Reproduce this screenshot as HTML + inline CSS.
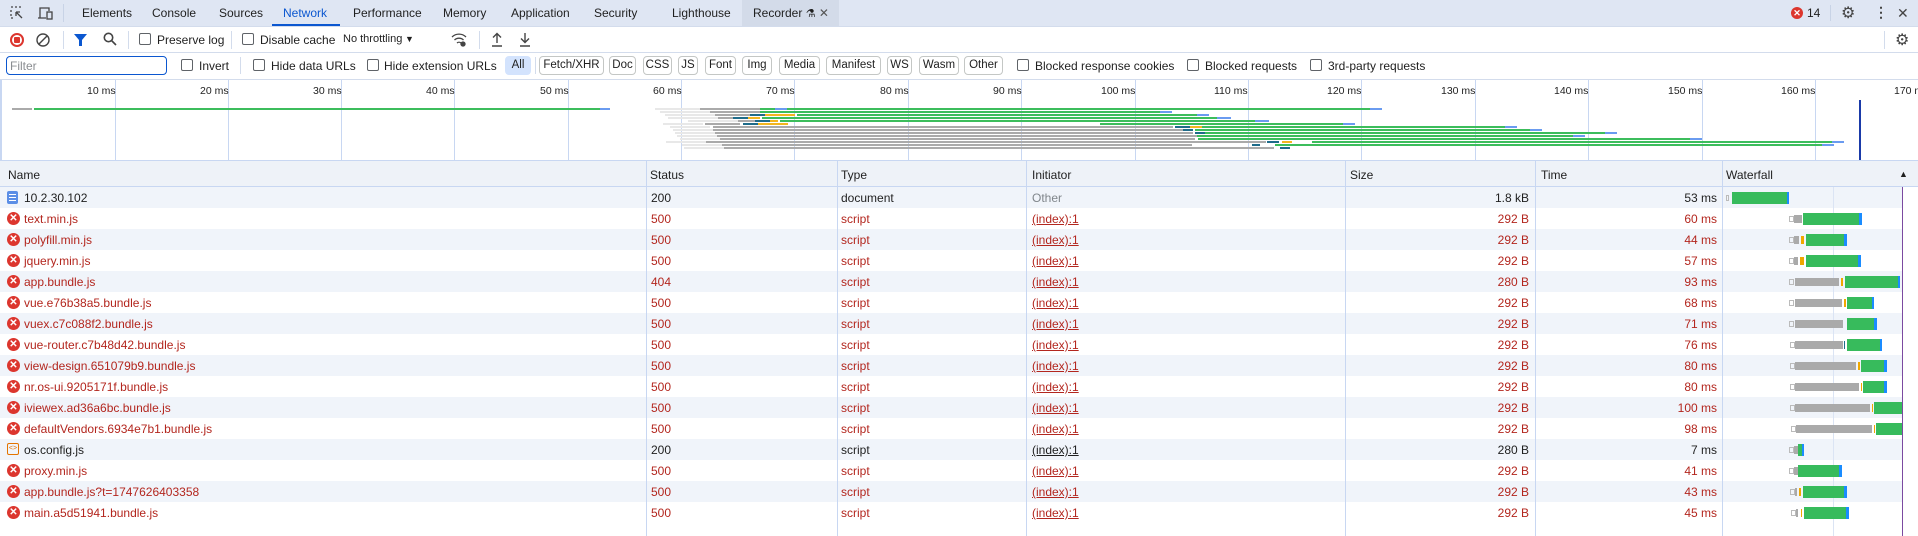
<!DOCTYPE html>
<html><head><meta charset="utf-8"><style>
*{margin:0;padding:0;box-sizing:border-box}
body{width:1918px;height:536px;overflow:hidden;background:#fff;font-family:"Liberation Sans",sans-serif;font-size:12px;color:#1f1f1f;position:relative}
.a{position:absolute;white-space:nowrap}
.cb{position:absolute;width:12px;height:12px;border:1px solid #5f6368;border-radius:2px;background:#fff}
.chip{position:absolute;top:56px;height:19px;border:1px solid #c4c7c5;border-radius:4px;font-size:11.5px;line-height:17px;text-align:center;color:#1f1f1f}
.row{position:absolute;left:0;width:1902px;height:21px}
.row.o{background:#f0f4fa}
.row span{position:absolute;top:4px;white-space:nowrap}
.r{color:#b3261e}
.vl{position:absolute;width:1px;background:#c8d7f2}
.ic{position:absolute;left:7px;top:4px;width:13px;height:13px;border-radius:50%;background:#dc362e;color:#fff;font-size:10px;line-height:13px;text-align:center;font-weight:bold}
.b{position:absolute}
.ob{position:absolute;height:2px}
</style></head><body>
<!-- tab bar -->
<div class="a" style="left:0;top:0;width:1918px;height:26px;background:#dfe6f3"></div>
<div class="a" style="left:742px;top:0;width:97px;height:26px;background:#d3dbe9"></div>
<svg class="a" style="left:10px;top:6px" width="14" height="14" viewBox="0 0 14 14" fill="none" stroke="#444" stroke-width="1.3"><path d="M1 1h2M5 1h2M9 1h2M1 4v2M1 8v2M1 12h2M6 6l6 6M6 6h4M6 6v4" /></svg>
<svg class="a" style="left:37px;top:6px" width="16" height="14" viewBox="0 0 16 14" fill="none" stroke="#444" stroke-width="1.3"><path d="M3 12V2h9v3M1 12h8"/><rect x="10" y="6" width="5" height="7"/></svg>
<div class="a" style="left:63px;top:4px;width:1px;height:18px;background:#c8d3e6"></div>
<div class="a" style="left:82px;top:6px">Elements</div>
<div class="a" style="left:152px;top:6px">Console</div>
<div class="a" style="left:219px;top:6px">Sources</div>
<div class="a" style="left:283px;top:6px;color:#0b57d0">Network</div>
<div class="a" style="left:272px;top:24px;width:68px;height:2px;background:#0b57d0"></div>
<div class="a" style="left:353px;top:6px">Performance</div>
<div class="a" style="left:443px;top:6px">Memory</div>
<div class="a" style="left:511px;top:6px">Application</div>
<div class="a" style="left:594px;top:6px">Security</div>
<div class="a" style="left:672px;top:6px">Lighthouse</div>
<div class="a" style="left:753px;top:6px">Recorder <span style="font-size:11px">⚗</span> <span style="color:#555">✕</span></div>
<div class="a" style="left:1791px;top:7px;width:12px;height:12px;border-radius:50%;background:#dc362e;color:#fff;font-size:9px;line-height:12px;text-align:center;font-weight:bold">✕</div>
<div class="a" style="left:1807px;top:6px">14</div>
<div class="a" style="left:1830px;top:5px;width:1px;height:16px;background:#c8d3e6"></div>
<div class="a" style="left:1841px;top:3px;font-size:16px;color:#444">⚙</div>
<div class="a" style="left:1874px;top:4px;font-size:14px;color:#444;font-weight:bold">⋮</div>
<div class="a" style="left:1897px;top:5px;font-size:14px;color:#444">✕</div>
<!-- toolbar -->
<div class="a" style="left:0;top:26px;width:1918px;height:1px;background:#d3dcec"></div>
<div class="a" style="left:10px;top:33px;width:14px;height:14px;border-radius:50%;border:2px solid #dc362e"></div>
<div class="a" style="left:14px;top:37px;width:6px;height:6px;background:#dc362e;border-radius:1px"></div>
<svg class="a" style="left:36px;top:33px" width="14" height="14" viewBox="0 0 14 14" fill="none" stroke="#444" stroke-width="1.4"><circle cx="7" cy="7" r="6"/><path d="M3 11L11 3"/></svg>
<div class="a" style="left:63px;top:31px;width:1px;height:18px;background:#d3dcec"></div>
<svg class="a" style="left:74px;top:33px" width="13" height="13" viewBox="0 0 13 13"><path d="M0 1h13L8 7v6H5V7z" fill="#0b57d0"/></svg>
<svg class="a" style="left:103px;top:32px" width="14" height="14" viewBox="0 0 14 14" fill="none" stroke="#444" stroke-width="1.6"><circle cx="5.5" cy="5.5" r="4.2"/><path d="M8.5 8.5L13 13"/></svg>
<div class="a" style="left:128px;top:31px;width:1px;height:18px;background:#d3dcec"></div>
<div class="cb" style="left:139px;top:33px"></div><div class="a" style="left:157px;top:33px">Preserve log</div>
<div class="a" style="left:231px;top:31px;width:1px;height:18px;background:#d3dcec"></div>
<div class="cb" style="left:242px;top:33px"></div><div class="a" style="left:260px;top:33px">Disable cache</div>
<div class="a" style="left:343px;top:33px;font-size:11px">No throttling</div>
<div class="a" style="left:405px;top:34px;font-size:9px">▼</div>
<svg class="a" style="left:451px;top:32px" width="16" height="15" viewBox="0 0 16 15" fill="none" stroke="#444" stroke-width="1.3"><path d="M1 5a10 10 0 0 1 14 0M3.5 8a6.5 6.5 0 0 1 9 0M6 11a3 3 0 0 1 4 0"/><circle cx="12" cy="12" r="2" fill="#444"/></svg>
<div class="a" style="left:479px;top:31px;width:1px;height:18px;background:#d3dcec"></div>
<svg class="a" style="left:491px;top:32px" width="12" height="15" viewBox="0 0 12 15" fill="none" stroke="#444" stroke-width="1.4"><path d="M6 11V2M2 5.5L6 1.5l4 4M1 14h10"/></svg>
<svg class="a" style="left:519px;top:32px" width="12" height="15" viewBox="0 0 12 15" fill="none" stroke="#444" stroke-width="1.4"><path d="M6 1v9M2 6.5l4 4 4-4M1 14h10"/></svg>
<div class="a" style="left:1884px;top:31px;width:1px;height:18px;background:#d3dcec"></div>
<div class="a" style="left:1895px;top:30px;font-size:16px;color:#444">⚙</div>
<!-- filter row -->
<div class="a" style="left:0;top:52px;width:1918px;height:1px;background:#d3dcec"></div>
<div class="a" style="left:6px;top:56px;width:161px;height:19px;border:1px solid #0b57d0;border-radius:4px;color:#8a8d91;font-size:12px;padding:2px 3px">Filter</div>
<div class="cb" style="left:181px;top:59px"></div><div class="a" style="left:199px;top:59px">Invert</div>
<div class="a" style="left:240px;top:57px;width:1px;height:17px;background:#d3dcec"></div>
<div class="cb" style="left:253px;top:59px"></div><div class="a" style="left:271px;top:59px">Hide data URLs</div>
<div class="cb" style="left:367px;top:59px"></div><div class="a" style="left:384px;top:59px">Hide extension URLs</div>
<div class="chip" style="left:505px;width:26px;background:#d3e3fd;border-color:#d3e3fd">All</div>
<div class="a" style="left:535px;top:57px;width:1px;height:17px;background:#d3dcec"></div>
<div class="chip" style="left:539px;width:65px">Fetch/XHR</div>
<div class="chip" style="left:609px;width:27px">Doc</div>
<div class="chip" style="left:643px;width:29px">CSS</div>
<div class="chip" style="left:678px;width:20px">JS</div>
<div class="chip" style="left:705px;width:31px">Font</div>
<div class="chip" style="left:742px;width:30px">Img</div>
<div class="chip" style="left:779px;width:41px">Media</div>
<div class="chip" style="left:826px;width:55px">Manifest</div>
<div class="chip" style="left:887px;width:25px">WS</div>
<div class="chip" style="left:919px;width:40px">Wasm</div>
<div class="chip" style="left:964px;width:39px">Other</div>
<div class="cb" style="left:1017px;top:59px"></div><div class="a" style="left:1035px;top:59px">Blocked response cookies</div>
<div class="cb" style="left:1187px;top:59px"></div><div class="a" style="left:1205px;top:59px">Blocked requests</div>
<div class="cb" style="left:1310px;top:59px"></div><div class="a" style="left:1328px;top:59px">3rd-party requests</div>
<!-- overview -->
<div class="a" style="left:0;top:79px;width:1918px;height:1px;background:#d3dcec"></div>
<div class="a" style="left:0;top:80px;width:2px;height:80px;background:#c8d7f2"></div>
<div class="vl" style="left:115px;top:80px;height:80px"></div>
<div class="vl" style="left:228px;top:80px;height:80px"></div>
<div class="vl" style="left:341px;top:80px;height:80px"></div>
<div class="vl" style="left:454px;top:80px;height:80px"></div>
<div class="vl" style="left:568px;top:80px;height:80px"></div>
<div class="vl" style="left:681px;top:80px;height:80px"></div>
<div class="vl" style="left:794px;top:80px;height:80px"></div>
<div class="vl" style="left:908px;top:80px;height:80px"></div>
<div class="vl" style="left:1021px;top:80px;height:80px"></div>
<div class="vl" style="left:1135px;top:80px;height:80px"></div>
<div class="vl" style="left:1248px;top:80px;height:80px"></div>
<div class="vl" style="left:1361px;top:80px;height:80px"></div>
<div class="vl" style="left:1475px;top:80px;height:80px"></div>
<div class="vl" style="left:1588px;top:80px;height:80px"></div>
<div class="vl" style="left:1702px;top:80px;height:80px"></div>
<div class="vl" style="left:1815px;top:80px;height:80px"></div>
<div style="font-size:10.5px">
<div class="a" style="left:87px;top:85px">10 ms</div><div class="a" style="left:200px;top:85px">20 ms</div><div class="a" style="left:313px;top:85px">30 ms</div><div class="a" style="left:426px;top:85px">40 ms</div><div class="a" style="left:540px;top:85px">50 ms</div><div class="a" style="left:653px;top:85px">60 ms</div><div class="a" style="left:766px;top:85px">70 ms</div><div class="a" style="left:880px;top:85px">80 ms</div><div class="a" style="left:993px;top:85px">90 ms</div><div class="a" style="left:1101px;top:85px">100 ms</div><div class="a" style="left:1214px;top:85px">110 ms</div><div class="a" style="left:1327px;top:85px">120 ms</div><div class="a" style="left:1441px;top:85px">130 ms</div><div class="a" style="left:1554px;top:85px">140 ms</div><div class="a" style="left:1668px;top:85px">150 ms</div><div class="a" style="left:1781px;top:85px">160 ms</div><div class="a" style="left:1894px;top:85px">170 ms</div>
</div>
<div class="a" style="left:1859px;top:100px;width:2px;height:60px;background:#1a3aa8"></div>
<!-- overview bars -->
<div class="ob" style="left:12px;top:108px;width:20px;background:#aaa"></div><div class="ob" style="left:34px;top:108px;width:566px;background:#3cbd5c"></div><div class="ob" style="left:600px;top:108px;width:10px;background:#6a9bf0"></div>
<div class="ob" style="left:655px;top:108px;width:60px;background:#e8e8e8"></div><div class="ob" style="left:700px;top:108px;width:60px;background:#aaa"></div><div class="ob" style="left:760px;top:108px;width:622px;background:#3cbd5c"></div><div class="ob" style="left:775px;top:108px;width:12px;background:#6a9bf0"></div><div class="ob" style="left:1370px;top:108px;width:12px;background:#6a9bf0"></div>
<div class="ob" style="left:660px;top:111px;width:50px;background:#e8e8e8"></div><div class="ob" style="left:710px;top:111px;width:50px;background:#aaa"></div><div class="ob" style="left:760px;top:111px;width:400px;background:#3cbd5c"></div><div class="ob" style="left:1160px;top:111px;width:12px;background:#6a9bf0"></div>
<div class="ob" style="left:665px;top:114px;width:50px;background:#e8e8e8"></div><div class="ob" style="left:715px;top:114px;width:35px;background:#aaa"></div><div class="ob" style="left:750px;top:114px;width:15px;background:#1f6c8a"></div><div class="ob" style="left:765px;top:114px;width:30px;background:#f3b61f"></div><div class="ob" style="left:797px;top:114px;width:400px;background:#3cbd5c"></div><div class="ob" style="left:1197px;top:114px;width:12px;background:#6a9bf0"></div>
<div class="ob" style="left:668px;top:117px;width:50px;background:#e8e8e8"></div><div class="ob" style="left:718px;top:117px;width:20px;background:#aaa"></div><div class="ob" style="left:733px;top:117px;width:15px;background:#1f6c8a"></div><div class="ob" style="left:748px;top:117px;width:12px;background:#f3b61f"></div><div class="ob" style="left:762px;top:117px;width:455px;background:#3cbd5c"></div><div class="ob" style="left:1217px;top:117px;width:14px;background:#6a9bf0"></div>
<div class="ob" style="left:688px;top:120px;width:50px;background:#e8e8e8"></div><div class="ob" style="left:738px;top:120px;width:20px;background:#aaa"></div><div class="ob" style="left:755px;top:120px;width:15px;background:#1f6c8a"></div><div class="ob" style="left:770px;top:120px;width:8px;background:#f3b61f"></div><div class="ob" style="left:780px;top:120px;width:480px;background:#3cbd5c"></div><div class="ob" style="left:1255px;top:120px;width:14px;background:#6a9bf0"></div>
<div class="ob" style="left:663px;top:123px;width:40px;background:#e8e8e8"></div><div class="ob" style="left:705px;top:123px;width:35px;background:#aaa"></div><div class="ob" style="left:743px;top:123px;width:15px;background:#1f6c8a"></div><div class="ob" style="left:758px;top:123px;width:30px;background:#f3b61f"></div><div class="ob" style="left:1100px;top:123px;width:250px;background:#3cbd5c"></div><div class="ob" style="left:1343px;top:123px;width:12px;background:#6a9bf0"></div>
<div class="ob" style="left:670px;top:126px;width:40px;background:#e8e8e8"></div><div class="ob" style="left:713px;top:126px;width:460px;background:#aaa"></div><div class="ob" style="left:1175px;top:126px;width:15px;background:#1f6c8a"></div><div class="ob" style="left:1190px;top:126px;width:12px;background:#f3b61f"></div><div class="ob" style="left:1202px;top:126px;width:303px;background:#3cbd5c"></div><div class="ob" style="left:1505px;top:126px;width:12px;background:#6a9bf0"></div>
<div class="ob" style="left:673px;top:129px;width:40px;background:#e8e8e8"></div><div class="ob" style="left:713px;top:129px;width:470px;background:#aaa"></div><div class="ob" style="left:1183px;top:129px;width:10px;background:#1f6c8a"></div><div class="ob" style="left:1195px;top:129px;width:340px;background:#3cbd5c"></div><div class="ob" style="left:1530px;top:129px;width:12px;background:#6a9bf0"></div>
<div class="ob" style="left:675px;top:132px;width:40px;background:#e8e8e8"></div><div class="ob" style="left:715px;top:132px;width:478px;background:#aaa"></div><div class="ob" style="left:1195px;top:132px;width:10px;background:#1f6c8a"></div><div class="ob" style="left:1205px;top:132px;width:400px;background:#3cbd5c"></div><div class="ob" style="left:1605px;top:132px;width:12px;background:#6a9bf0"></div>
<div class="ob" style="left:677px;top:135px;width:40px;background:#e8e8e8"></div><div class="ob" style="left:717px;top:135px;width:480px;background:#aaa"></div><div class="ob" style="left:1197px;top:135px;width:380px;background:#3cbd5c"></div><div class="ob" style="left:1573px;top:135px;width:12px;background:#6a9bf0"></div>
<div class="ob" style="left:680px;top:138px;width:40px;background:#e8e8e8"></div><div class="ob" style="left:720px;top:138px;width:475px;background:#aaa"></div><div class="ob" style="left:1198px;top:138px;width:500px;background:#3cbd5c"></div><div class="ob" style="left:1690px;top:138px;width:12px;background:#6a9bf0"></div>
<div class="ob" style="left:666px;top:141px;width:40px;background:#e8e8e8"></div><div class="ob" style="left:706px;top:141px;width:560px;background:#aaa"></div><div class="ob" style="left:1267px;top:141px;width:12px;background:#1f6c8a"></div><div class="ob" style="left:1282px;top:141px;width:10px;background:#f3b61f"></div><div class="ob" style="left:1312px;top:141px;width:520px;background:#3cbd5c"></div><div class="ob" style="left:1832px;top:141px;width:12px;background:#6a9bf0"></div>
<div class="ob" style="left:682px;top:144px;width:40px;background:#e8e8e8"></div><div class="ob" style="left:722px;top:144px;width:470px;background:#aaa"></div><div class="ob" style="left:1252px;top:144px;width:8px;background:#1f6c8a"></div><div class="ob" style="left:1275px;top:144px;width:548px;background:#3cbd5c"></div><div class="ob" style="left:1822px;top:144px;width:12px;background:#6a9bf0"></div>
<div class="ob" style="left:684px;top:147px;width:40px;background:#e8e8e8"></div><div class="ob" style="left:724px;top:147px;width:550px;background:#aaa"></div><div class="ob" style="left:1280px;top:147px;width:10px;background:#1f6c8a"></div>
<!-- table header -->
<div class="a" style="left:0;top:160px;width:1918px;height:1px;background:#c8d7f2"></div>
<div class="a" style="left:0;top:161px;width:1918px;height:26px;background:#eef2f8"></div>
<div class="a" style="left:0;top:186px;width:1918px;height:1px;background:#c8d7f2"></div>
<div class="a" style="left:8px;top:168px">Name</div>
<div class="a" style="left:650px;top:168px">Status</div>
<div class="a" style="left:841px;top:168px">Type</div>
<div class="a" style="left:1032px;top:168px">Initiator</div>
<div class="a" style="left:1350px;top:168px">Size</div>
<div class="a" style="left:1541px;top:168px">Time</div>
<div class="a" style="left:1726px;top:168px">Waterfall</div>
<div class="a" style="left:1899px;top:169px;font-size:9px">▲</div>
<!-- rows -->
<div class="row o" style="top:187px"><div class="a" style="left:7px;top:4px;width:11px;height:13px;background:#5b8ee6;border-radius:2px"></div><div class="a" style="left:9px;top:7px;width:7px;height:1px;background:#fff"></div><div class="a" style="left:9px;top:10px;width:7px;height:1px;background:#fff"></div><div class="a" style="left:9px;top:13px;width:7px;height:1px;background:#fff"></div><span style="left:24px">10.2.30.102</span><span style="left:651px">200</span><span style="left:841px">document</span><span style="left:1032px;color:#80868b">Other</span><span style="right:373px">1.8 kB</span><span style="right:185px">53 ms</span></div>
<div class="row" style="top:208px"><div class="ic">✕</div><span class="r" style="left:24px">text.min.js</span><span class="r" style="left:651px">500</span><span class="r" style="left:841px">script</span><span class="r" style="left:1032px;text-decoration:underline">(index):1</span><span class="r" style="right:373px">292 B</span><span class="r" style="right:185px">60 ms</span></div>
<div class="row o" style="top:229px"><div class="ic">✕</div><span class="r" style="left:24px">polyfill.min.js</span><span class="r" style="left:651px">500</span><span class="r" style="left:841px">script</span><span class="r" style="left:1032px;text-decoration:underline">(index):1</span><span class="r" style="right:373px">292 B</span><span class="r" style="right:185px">44 ms</span></div>
<div class="row" style="top:250px"><div class="ic">✕</div><span class="r" style="left:24px">jquery.min.js</span><span class="r" style="left:651px">500</span><span class="r" style="left:841px">script</span><span class="r" style="left:1032px;text-decoration:underline">(index):1</span><span class="r" style="right:373px">292 B</span><span class="r" style="right:185px">57 ms</span></div>
<div class="row o" style="top:271px"><div class="ic">✕</div><span class="r" style="left:24px">app.bundle.js</span><span class="r" style="left:651px">404</span><span class="r" style="left:841px">script</span><span class="r" style="left:1032px;text-decoration:underline">(index):1</span><span class="r" style="right:373px">280 B</span><span class="r" style="right:185px">93 ms</span></div>
<div class="row" style="top:292px"><div class="ic">✕</div><span class="r" style="left:24px">vue.e76b38a5.bundle.js</span><span class="r" style="left:651px">500</span><span class="r" style="left:841px">script</span><span class="r" style="left:1032px;text-decoration:underline">(index):1</span><span class="r" style="right:373px">292 B</span><span class="r" style="right:185px">68 ms</span></div>
<div class="row o" style="top:313px"><div class="ic">✕</div><span class="r" style="left:24px">vuex.c7c088f2.bundle.js</span><span class="r" style="left:651px">500</span><span class="r" style="left:841px">script</span><span class="r" style="left:1032px;text-decoration:underline">(index):1</span><span class="r" style="right:373px">292 B</span><span class="r" style="right:185px">71 ms</span></div>
<div class="row" style="top:334px"><div class="ic">✕</div><span class="r" style="left:24px">vue-router.c7b48d42.bundle.js</span><span class="r" style="left:651px">500</span><span class="r" style="left:841px">script</span><span class="r" style="left:1032px;text-decoration:underline">(index):1</span><span class="r" style="right:373px">292 B</span><span class="r" style="right:185px">76 ms</span></div>
<div class="row o" style="top:355px"><div class="ic">✕</div><span class="r" style="left:24px">view-design.651079b9.bundle.js</span><span class="r" style="left:651px">500</span><span class="r" style="left:841px">script</span><span class="r" style="left:1032px;text-decoration:underline">(index):1</span><span class="r" style="right:373px">292 B</span><span class="r" style="right:185px">80 ms</span></div>
<div class="row" style="top:376px"><div class="ic">✕</div><span class="r" style="left:24px">nr.os-ui.9205171f.bundle.js</span><span class="r" style="left:651px">500</span><span class="r" style="left:841px">script</span><span class="r" style="left:1032px;text-decoration:underline">(index):1</span><span class="r" style="right:373px">292 B</span><span class="r" style="right:185px">80 ms</span></div>
<div class="row o" style="top:397px"><div class="ic">✕</div><span class="r" style="left:24px">iviewex.ad36a6bc.bundle.js</span><span class="r" style="left:651px">500</span><span class="r" style="left:841px">script</span><span class="r" style="left:1032px;text-decoration:underline">(index):1</span><span class="r" style="right:373px">292 B</span><span class="r" style="right:185px">100 ms</span></div>
<div class="row" style="top:418px"><div class="ic">✕</div><span class="r" style="left:24px">defaultVendors.6934e7b1.bundle.js</span><span class="r" style="left:651px">500</span><span class="r" style="left:841px">script</span><span class="r" style="left:1032px;text-decoration:underline">(index):1</span><span class="r" style="right:373px">292 B</span><span class="r" style="right:185px">98 ms</span></div>
<div class="row o" style="top:439px"><div class="a" style="left:7px;top:4px;width:12px;height:12px;border:1.5px solid #e37400;border-radius:2px;font-size:7px;color:#e37400;line-height:9px;text-align:center">&lt;&gt;</div><span style="left:24px">os.config.js</span><span style="left:651px">200</span><span style="left:841px">script</span><span style="left:1032px;text-decoration:underline">(index):1</span><span style="right:373px">280 B</span><span style="right:185px">7 ms</span></div>
<div class="row" style="top:460px"><div class="ic">✕</div><span class="r" style="left:24px">proxy.min.js</span><span class="r" style="left:651px">500</span><span class="r" style="left:841px">script</span><span class="r" style="left:1032px;text-decoration:underline">(index):1</span><span class="r" style="right:373px">292 B</span><span class="r" style="right:185px">41 ms</span></div>
<div class="row o" style="top:481px"><div class="ic">✕</div><span class="r" style="left:24px">app.bundle.js?t=1747626403358</span><span class="r" style="left:651px">500</span><span class="r" style="left:841px">script</span><span class="r" style="left:1032px;text-decoration:underline">(index):1</span><span class="r" style="right:373px">292 B</span><span class="r" style="right:185px">43 ms</span></div>
<div class="row" style="top:502px"><div class="ic">✕</div><span class="r" style="left:24px">main.a5d51941.bundle.js</span><span class="r" style="left:651px">500</span><span class="r" style="left:841px">script</span><span class="r" style="left:1032px;text-decoration:underline">(index):1</span><span class="r" style="right:373px">292 B</span><span class="r" style="right:185px">45 ms</span></div>
<!-- column lines -->
<div class="vl" style="left:646px;top:161px;height:375px"></div>
<div class="vl" style="left:837px;top:161px;height:375px"></div>
<div class="vl" style="left:1026px;top:161px;height:375px"></div>
<div class="vl" style="left:1345px;top:161px;height:375px"></div>
<div class="vl" style="left:1535px;top:161px;height:375px"></div>
<div class="vl" style="left:1722px;top:161px;height:375px"></div>
<div class="vl" style="left:1833px;top:187px;height:349px;background:#dbe4f4"></div>
<div class="a" style="left:1902px;top:187px;width:1px;height:349px;background:#7b4aa0"></div>
<!-- waterfall bars -->
<div style="position:absolute;left:0;top:0">
<div class="b" style="left:1726px;top:195px;width:3px;height:6px;border:1px solid #bbb"></div><div class="b" style="left:1732px;top:192px;width:55px;height:12px;background:#37bb5c"></div><div class="b" style="left:1787px;top:192px;width:2px;height:12px;background:#1a8cff"></div>
<div class="b" style="left:1789px;top:216px;width:5px;height:6px;border:1px solid #bbb"></div><div class="b" style="left:1794px;top:215px;width:8px;height:8px;background:#aaa"></div><div class="b" style="left:1803px;top:213px;width:56px;height:12px;background:#37bb5c"></div><div class="b" style="left:1859px;top:213px;width:3px;height:12px;background:#1a8cff"></div>
<div class="b" style="left:1789px;top:237px;width:5px;height:6px;border:1px solid #bbb"></div><div class="b" style="left:1794px;top:236px;width:5px;height:8px;background:#aaa"></div><div class="b" style="left:1801px;top:236px;width:3px;height:8px;background:#f0a800"></div><div class="b" style="left:1806px;top:234px;width:38px;height:12px;background:#37bb5c"></div><div class="b" style="left:1844px;top:234px;width:3px;height:12px;background:#1a8cff"></div>
<div class="b" style="left:1789px;top:258px;width:5px;height:6px;border:1px solid #bbb"></div><div class="b" style="left:1794px;top:257px;width:4px;height:8px;background:#aaa"></div><div class="b" style="left:1800px;top:257px;width:4px;height:8px;background:#f0a800"></div><div class="b" style="left:1806px;top:255px;width:52px;height:12px;background:#37bb5c"></div><div class="b" style="left:1858px;top:255px;width:3px;height:12px;background:#1a8cff"></div>
<div class="b" style="left:1789px;top:279px;width:5px;height:6px;border:1px solid #bbb"></div><div class="b" style="left:1795px;top:278px;width:44px;height:8px;background:#aaa"></div><div class="b" style="left:1841px;top:278px;width:2px;height:8px;background:#f0a800"></div><div class="b" style="left:1845px;top:276px;width:53px;height:12px;background:#37bb5c"></div><div class="b" style="left:1898px;top:276px;width:2px;height:12px;background:#1a8cff"></div>
<div class="b" style="left:1789px;top:300px;width:5px;height:6px;border:1px solid #bbb"></div><div class="b" style="left:1795px;top:299px;width:47px;height:8px;background:#aaa"></div><div class="b" style="left:1844px;top:299px;width:2px;height:8px;background:#f0a800"></div><div class="b" style="left:1847px;top:297px;width:25px;height:12px;background:#37bb5c"></div><div class="b" style="left:1872px;top:297px;width:2px;height:12px;background:#1a8cff"></div>
<div class="b" style="left:1789px;top:321px;width:5px;height:6px;border:1px solid #bbb"></div><div class="b" style="left:1795px;top:320px;width:48px;height:8px;background:#aaa"></div><div class="b" style="left:1847px;top:318px;width:27px;height:12px;background:#37bb5c"></div><div class="b" style="left:1874px;top:318px;width:3px;height:12px;background:#1a8cff"></div>
<div class="b" style="left:1790px;top:342px;width:5px;height:6px;border:1px solid #bbb"></div><div class="b" style="left:1795px;top:341px;width:48px;height:8px;background:#aaa"></div><div class="b" style="left:1844px;top:341px;width:1px;height:8px;background:#1f6c8a"></div><div class="b" style="left:1847px;top:339px;width:33px;height:12px;background:#37bb5c"></div><div class="b" style="left:1880px;top:339px;width:2px;height:12px;background:#1a8cff"></div>
<div class="b" style="left:1790px;top:363px;width:5px;height:6px;border:1px solid #bbb"></div><div class="b" style="left:1795px;top:362px;width:61px;height:8px;background:#aaa"></div><div class="b" style="left:1858px;top:362px;width:2px;height:8px;background:#f0a800"></div><div class="b" style="left:1861px;top:360px;width:23px;height:12px;background:#37bb5c"></div><div class="b" style="left:1884px;top:360px;width:3px;height:12px;background:#1a8cff"></div>
<div class="b" style="left:1790px;top:384px;width:5px;height:6px;border:1px solid #bbb"></div><div class="b" style="left:1795px;top:383px;width:64px;height:8px;background:#aaa"></div><div class="b" style="left:1861px;top:383px;width:1px;height:8px;background:#f0a800"></div><div class="b" style="left:1863px;top:381px;width:21px;height:12px;background:#37bb5c"></div><div class="b" style="left:1884px;top:381px;width:3px;height:12px;background:#1a8cff"></div>
<div class="b" style="left:1790px;top:405px;width:5px;height:6px;border:1px solid #bbb"></div><div class="b" style="left:1795px;top:404px;width:75px;height:8px;background:#aaa"></div><div class="b" style="left:1872px;top:404px;width:1px;height:8px;background:#f0a800"></div><div class="b" style="left:1874px;top:402px;width:28px;height:12px;background:#37bb5c"></div>
<div class="b" style="left:1791px;top:426px;width:5px;height:6px;border:1px solid #bbb"></div><div class="b" style="left:1796px;top:425px;width:76px;height:8px;background:#aaa"></div><div class="b" style="left:1874px;top:425px;width:1px;height:8px;background:#f0a800"></div><div class="b" style="left:1876px;top:423px;width:26px;height:12px;background:#37bb5c"></div>
<div class="b" style="left:1789px;top:447px;width:5px;height:6px;border:1px solid #bbb"></div><div class="b" style="left:1794px;top:446px;width:4px;height:8px;background:#aaa"></div><div class="b" style="left:1798px;top:444px;width:4px;height:12px;background:#37bb5c"></div><div class="b" style="left:1802px;top:444px;width:2px;height:12px;background:#1a8cff"></div>
<div class="b" style="left:1789px;top:468px;width:5px;height:6px;border:1px solid #bbb"></div><div class="b" style="left:1794px;top:467px;width:4px;height:8px;background:#aaa"></div><div class="b" style="left:1798px;top:465px;width:41px;height:12px;background:#37bb5c"></div><div class="b" style="left:1839px;top:465px;width:3px;height:12px;background:#1a8cff"></div>
<div class="b" style="left:1790px;top:489px;width:5px;height:6px;border:1px solid #bbb"></div><div class="b" style="left:1795px;top:488px;width:2px;height:8px;background:#aaa"></div><div class="b" style="left:1799px;top:488px;width:2px;height:8px;background:#f0a800"></div><div class="b" style="left:1803px;top:486px;width:41px;height:12px;background:#37bb5c"></div><div class="b" style="left:1844px;top:486px;width:3px;height:12px;background:#1a8cff"></div>
<div class="b" style="left:1791px;top:510px;width:5px;height:6px;border:1px solid #bbb"></div><div class="b" style="left:1796px;top:509px;width:2px;height:8px;background:#aaa"></div><div class="b" style="left:1801px;top:509px;width:1px;height:8px;background:#f0a800"></div><div class="b" style="left:1804px;top:507px;width:42px;height:12px;background:#37bb5c"></div><div class="b" style="left:1846px;top:507px;width:3px;height:12px;background:#1a8cff"></div>
</div>
</body></html>
